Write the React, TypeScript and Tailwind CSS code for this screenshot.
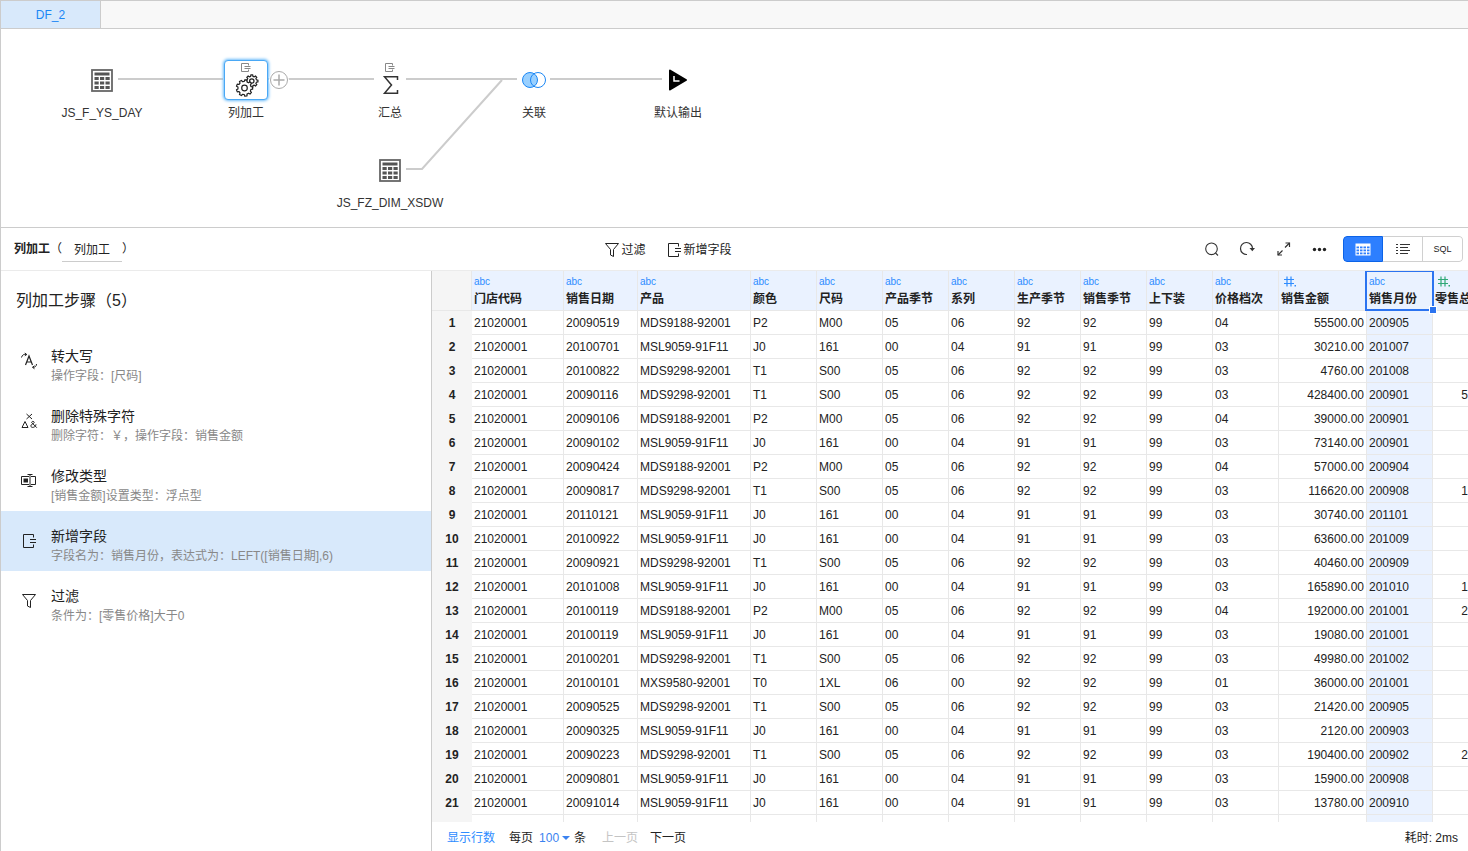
import type { ReactNode } from "react";

const FONT = "font-['Liberation_Sans','Noto_Sans_CJK_SC',sans-serif]";

/* ---------- icons ---------- */

function gearPath(cx: number, cy: number, outer: number, inner: number, teeth: number) {
  const step = (Math.PI * 2) / teeth;
  const points: string[] = [];
  for (let i = 0; i < teeth; i++) {
    const a = i * step;
    const corners: [number, number][] = [
      [inner, a - step * 0.3],
      [outer, a - step * 0.2],
      [outer, a + step * 0.2],
      [inner, a + step * 0.3],
    ];
    corners.forEach(([r, t]) => {
      points.push(`${(cx + r * Math.cos(t)).toFixed(2)} ${(cy + r * Math.sin(t)).toFixed(2)}`);
    });
  }
  return `M${points.join("L")}Z`;
}

function FieldGlyph({ className }: { className: string }) {
  return (
    <svg viewBox="0 0 16 16" className={className} fill="none" stroke="currentColor" aria-hidden="true">
      <path d="M12.500 4.500v-3h-10v13h10v-3M9 6.500h6M9 9.500h6" />
    </svg>
  );
}

function FunnelGlyph() {
  return (
    <svg viewBox="0 0 16 16" className="size-4" fill="none" stroke="currentColor" aria-hidden="true">
      <path d="M1.500 1.500h13l-5 6v7l-3-1.500v-5.500z" strokeLinejoin="round" />
    </svg>
  );
}

function NodeSvg({ children }: { children: ReactNode }) {
  return (
    <svg viewBox="0 0 44 44" className="size-11" fill="none" aria-hidden="true">
      {children}
    </svg>
  );
}

function SheetNodeIcon() {
  return (
    <NodeSvg>
      <rect x="12" y="12" width="20" height="21" stroke="#666" strokeWidth="1.800" />
      <path d="M14.500 14.500h15v3h-15z" fill="#555" />
      {[19, 23.5, 28].map((y) =>
        [14.5, 20, 25.5].map((x) => <rect key={`${x}-${y}`} x={x} y={y} width="4.200" height="3" fill="#555" />),
      )}
    </NodeSvg>
  );
}

function SmallField() {
  return <path d="M24.500 7.500v-2h-7v8h7v-2M20.500 8.500h6M20.500 10.500h6" stroke="#888" />;
}

function GearsNodeIcon() {
  return (
    <NodeSvg>
      <SmallField />
      <g stroke="#222" strokeWidth="1.200" fill="#fff" strokeLinejoin="round">
        <path d={gearPath(27.8, 23, 6.2, 4.8, 8)} />
        <circle cx="27.800" cy="23" r="2.200" />
        <path d={gearPath(20.5, 30, 8.2, 6.6, 9)} />
        <circle cx="20.500" cy="30" r="2.800" />
      </g>
    </NodeSvg>
  );
}

function SigmaNodeIcon() {
  return (
    <NodeSvg>
      <SmallField />
      <path d="M29.500 22v-3.300h-13l7 8.300-7 8.300h13v-3.300" stroke="#333" strokeWidth="1.500" />
    </NodeSvg>
  );
}

function JoinNodeIcon() {
  return (
    <NodeSvg>
      <circle cx="26" cy="22" r="7.500" fill="#fff" />
      <circle cx="18" cy="22" r="7.500" fill="#99d0ff" stroke="#1b87f5" />
      <circle cx="26" cy="22" r="7.500" stroke="#1b87f5" />
    </NodeSvg>
  );
}

function OutputNodeIcon() {
  return (
    <NodeSvg>
      <path d="M14 12.500L30 22 14 31.500z" fill="#000" stroke="#000" strokeWidth="2" strokeLinejoin="round" />
      <path d="M18 18v5h5.500" stroke="#fff" strokeWidth="1.500" />
    </NodeSvg>
  );
}

/* ---------- flow canvas ---------- */

const NODES = [
  { label: "JS_F_YS_DAY", place: "left-[41px] top-[29px]", icon: <SheetNodeIcon />, selected: false },
  { label: "列加工", place: "left-[185px] top-[29px]", icon: <GearsNodeIcon />, selected: true },
  { label: "汇总", place: "left-[329px] top-[29px]", icon: <SigmaNodeIcon />, selected: false },
  { label: "关联", place: "left-[473px] top-[29px]", icon: <JoinNodeIcon />, selected: false },
  { label: "默认输出", place: "left-[617px] top-[29px]", icon: <OutputNodeIcon />, selected: false },
  { label: "JS_FZ_DIM_XSDW", place: "left-[329px] top-[119px]", icon: <SheetNodeIcon />, selected: false },
];

function FlowCanvas() {
  return (
    <section className="relative h-[199px] shrink-0 overflow-hidden border-b border-[#ccc] bg-white">
      <svg className="absolute top-0 left-0 h-[198px] w-[720px]" viewBox="0 0 720 198" fill="none" stroke="#ccc" strokeWidth="2" aria-hidden="true">
        <path d="M117 50H222M287 50H373M405 50H516M549 50H661M405 140H421L501 51" />
        <path d="M267 50H270" />
      </svg>
      {NODES.map((node) => (
        <div key={node.label} className={`absolute flex w-[120px] flex-col items-center ${node.place}`}>
          <div className="relative flex size-11 items-center justify-center">
            {node.selected && (
              <span className="absolute inset-x-0 inset-y-0.5 rounded-sm border border-[#4aa8f5] bg-white shadow-[0_0_3px_1px_#6bbcfa]" />
            )}
            <span className="relative">{node.icon}</span>
          </div>
          <span className="text-xs leading-[22px] whitespace-nowrap text-[#333]">{node.label}</span>
        </div>
      ))}
      <button type="button" aria-label="添加" className="absolute top-[41px] left-[268px] size-5 rounded-full bg-white">
        <svg viewBox="0 0 20 20" className="size-5" fill="none" stroke="#aaa" aria-hidden="true">
          <circle cx="10" cy="10" r="8.500" />
          <path d="M10 4.500v11M4.500 10h11" strokeWidth="1.500" />
        </svg>
      </button>
    </section>
  );
}

/* ---------- toolbar ---------- */

function Toolbar() {
  const iconButton = "flex h-6 w-6 items-center justify-center";
  return (
    <header className="flex h-[43px] shrink-0 items-center border-b border-[#ebebeb] pr-[5px] pl-[13px] text-xs text-[#222]">
      <div className="flex w-2/5 items-center">
        <label htmlFor="step-name" className="font-bold">列加工</label>
        <span>（</span>
        <input
          id="step-name"
          defaultValue="列加工"
          className="h-[26px] w-[60px] border-b border-[#ccc] bg-transparent px-3 outline-none"
        />
        <span>）</span>
      </div>
      <div className="ml-2.5 flex items-center gap-5 pt-0.5">
        <button type="button" className="flex items-center gap-0.5">
          <FunnelGlyph />
          过滤
        </button>
        <button type="button" className="flex items-center gap-0.5">
          <FieldGlyph className="size-4" />
          新增字段
        </button>
      </div>
      <div className="flex flex-1 items-center justify-end gap-3">
        <button type="button" aria-label="搜索" className={iconButton}>
          <svg viewBox="0 0 16 16" className="size-4" fill="none" stroke="#333" strokeWidth="1.100" aria-hidden="true">
            <circle cx="8.500" cy="7.800" r="5.800" />
            <path d="M12.500 12l2.500 2.500" />
          </svg>
        </button>
        <button type="button" aria-label="刷新" className={iconButton}>
          <svg viewBox="0 0 16 16" className="size-4" fill="none" stroke="#333" strokeWidth="1.200" aria-hidden="true">
            <path d="M8 13.500A6 6 0 1 1 13.500 7.500" />
            <path d="M10.500 7h5.500l-2.700 3.300z" fill="#333" stroke="none" />
          </svg>
        </button>
        <button type="button" aria-label="全屏" className={iconButton}>
          <svg viewBox="0 0 16 16" className="size-4" fill="none" stroke="#333" strokeWidth="1.200" aria-hidden="true">
            <path d="M10 6.500l4.500-4.500M7.500 9.500L3 14" />
            <path d="M10.500 2h4v4M3 10v4h4" />
          </svg>
        </button>
        <button type="button" aria-label="更多" className={iconButton}>
          <svg viewBox="0 0 16 16" className="size-4" fill="#222" aria-hidden="true">
            <circle cx="3.500" cy="8.500" r="1.700" />
            <circle cx="8.500" cy="8.500" r="1.700" />
            <circle cx="13.500" cy="8.500" r="1.700" />
          </svg>
        </button>
        <div className="flex h-[26px] overflow-hidden rounded-sm">
          <button type="button" aria-label="表格" className="flex w-10 items-center justify-center rounded-l-sm border border-[#0c63e7] bg-[#2d7fff]">
            <svg viewBox="0 0 16 13" className="h-[13px] w-4" aria-hidden="true">
              <path d="M.5.500h15v12H.5z" fill="#fff" />
              {[3.5, 6.5, 9.5].map((y) =>
                [1.5, 5, 8.5, 12].map((x) => <rect key={`${x}-${y}`} x={x} y={y} width="2.500" height="1.800" fill="#2d7fff" />),
              )}
            </svg>
          </button>
          <button type="button" aria-label="列表" className="flex w-10 items-center justify-center border-y border-r border-[#d0d0d0]">
            <svg viewBox="0 0 16 12" className="h-3 w-4" fill="none" stroke="#333" aria-hidden="true">
              <path d="M1 1.500h2M1 4.500h2M1 7.500h2M1 10.500h2M5 1.500h10M5 4.500h8M5 7.500h10M5 10.500h8" />
            </svg>
          </button>
          <button type="button" className="flex w-10 items-center justify-center rounded-r-sm border-y border-r border-[#d0d0d0] text-[9px]">
            SQL
          </button>
        </div>
      </div>
    </header>
  );
}

/* ---------- steps ---------- */

function UppercaseGlyph() {
  return (
    <svg viewBox="0 0 18 18" className="size-[18px]" fill="none" stroke="currentColor" aria-hidden="true">
      <path d="M5.500 13L9 4l3.500 9M6.700 10h4.600" strokeWidth="1.200" />
      <path d="M1.500 5.500C2 3 4 1.800 6.500 2.500M4.800 1l2 1.500-2 1.300M16.500 12c0 2.300-1.500 3.500-3.800 3.300M14.500 13.700l-2 1.600 2 1.500" />
    </svg>
  );
}

function SpecialCharsGlyph() {
  return (
    <svg viewBox="0 0 18 18" className="size-[18px]" fill="none" stroke="currentColor" aria-hidden="true">
      <path d="M6.500 2l5.500 5M12 2L6.500 7" />
      <path d="M5 9.500L2 15.500h6z" />
      <path d="M16.800 15.700l-5-5c-.7-1.500 2.500-1.900 2.400-.1-.1 1.200-3.400 1.500-3.400 3.300 0 2.300 4.700 2.100 5.200-1.600" />
    </svg>
  );
}

function TypeGlyph() {
  return (
    <svg viewBox="0 0 18 18" className="size-[18px]" fill="none" stroke="currentColor" aria-hidden="true">
      <path d="M9 4.500H1.500v8H9M11 4.500h4.500v8H11M10 3v11.500M7.500 2.500h5M7.500 14.500h5" />
      <path d="M3.500 6.500H8v4H3.500z" fill="currentColor" stroke="none" />
    </svg>
  );
}

const STEPS = [
  { title: "转大写", detail: "操作字段：[尺码]", icon: <UppercaseGlyph />, active: false },
  { title: "删除特殊字符", detail: "删除字符：￥，操作字段：销售金额", icon: <SpecialCharsGlyph />, active: false },
  { title: "修改类型", detail: "[销售金额]设置类型：浮点型", icon: <TypeGlyph />, active: false },
  { title: "新增字段", detail: "字段名为：销售月份，表达式为：LEFT([销售日期],6)", icon: <FieldGlyph className="size-4" />, active: true },
  { title: "过滤", detail: "条件为：[零售价格]大于0", icon: <FunnelGlyph />, active: false },
];

function StepList() {
  return (
    <aside className="w-[431px] shrink-0 border-r border-[#ccc]">
      <h2 className="flex h-[60px] items-center pl-[15px] text-base text-[#222]">列加工步骤（5）</h2>
      <ul>
        {STEPS.map((step) => (
          <li key={step.title}>
            <button
              type="button"
              className={`flex h-[60px] w-full items-center gap-[13px] pl-[19px] text-left ${step.active ? "bg-[#d8e9fb]" : ""}`}
            >
              <span className="flex w-[18px] justify-center text-[#222]">{step.icon}</span>
              <span className="flex flex-col pt-2.5">
                <span className="text-sm leading-5 text-[#222]">{step.title}</span>
                <span className="text-xs leading-5 text-[#888]">{step.detail}</span>
              </span>
            </button>
          </li>
        ))}
      </ul>
    </aside>
  );
}

/* ---------- data grid ---------- */

const COLUMNS = [
  { name: "门店代码", kind: "text", width: "w-[92px]" },
  { name: "销售日期", kind: "text", width: "w-[74px]" },
  { name: "产品", kind: "text", width: "w-[113px]" },
  { name: "颜色", kind: "text", width: "w-[66px]" },
  { name: "尺码", kind: "text", width: "w-[66px]" },
  { name: "产品季节", kind: "text", width: "w-[66px]" },
  { name: "系列", kind: "text", width: "w-[66px]" },
  { name: "生产季节", kind: "text", width: "w-[66px]" },
  { name: "销售季节", kind: "text", width: "w-[66px]" },
  { name: "上下装", kind: "text", width: "w-[66px]" },
  { name: "价格档次", kind: "text", width: "w-[66px]" },
  { name: "销售金额", kind: "number", width: "w-[88px]" },
  { name: "销售月份", kind: "text", width: "w-[66px]" },
  { name: "零售总", kind: "measure", width: "" },
];
const MONTH_COLUMN = 12;

const PRODUCTS: Record<string, string[]> = {
  "MDS9188-92001": ["P2", "M00", "05", "06", "92", "92", "99", "04"],
  "MSL9059-91F11": ["J0", "161", "00", "04", "91", "91", "99", "03"],
  "MDS9298-92001": ["T1", "S00", "05", "06", "92", "92", "99", "03"],
  "MXS9580-92001": ["T0", "1XL", "06", "00", "92", "92", "99", "01"],
};

const SALES: [string, string, string, string][] = [
  ["20090519", "MDS9188-92001", "55500.00", ""],
  ["20100701", "MSL9059-91F11", "30210.00", ""],
  ["20100822", "MDS9298-92001", "4760.00", ""],
  ["20090116", "MDS9298-92001", "428400.00", "5"],
  ["20090106", "MDS9188-92001", "39000.00", ""],
  ["20090102", "MSL9059-91F11", "73140.00", ""],
  ["20090424", "MDS9188-92001", "57000.00", ""],
  ["20090817", "MDS9298-92001", "116620.00", "1"],
  ["20110121", "MSL9059-91F11", "30740.00", ""],
  ["20100922", "MSL9059-91F11", "63600.00", ""],
  ["20090921", "MDS9298-92001", "40460.00", ""],
  ["20101008", "MSL9059-91F11", "165890.00", "1"],
  ["20100119", "MDS9188-92001", "192000.00", "2"],
  ["20100119", "MSL9059-91F11", "19080.00", ""],
  ["20100201", "MDS9298-92001", "49980.00", ""],
  ["20100101", "MXS9580-92001", "36000.00", ""],
  ["20090525", "MDS9298-92001", "21420.00", ""],
  ["20090325", "MSL9059-91F11", "2120.00", ""],
  ["20090223", "MDS9298-92001", "190400.00", "2"],
  ["20090801", "MSL9059-91F11", "15900.00", ""],
  ["20091014", "MSL9059-91F11", "13780.00", ""],
];

const ROWS = SALES.map(([date, product, amount, total]) => [
  "21020001",
  date,
  product,
  ...PRODUCTS[product],
  amount,
  date.slice(0, 6),
  total,
]);

function cellTone(column: number) {
  if (column === MONTH_COLUMN) return "bg-[#eaf2ff] px-0.5";
  if (column === 11) return "px-0.5 text-right";
  if (column === 13) return "text-right";
  return "px-0.5";
}

function NumberGlyph({ className }: { className: string }) {
  return (
    <svg viewBox="0 0 14 15" className={`h-[15px] w-3.5 ${className}`} fill="none" stroke="currentColor" strokeWidth="1.200" aria-hidden="true">
      <path d="M1 5.500h10M1 9.500h10M4 2.500v10M8 2.500v10" />
      <path d="M11.500 11h1.500v1.500h-1.500z" fill="currentColor" stroke="none" />
    </svg>
  );
}

function DataGrid() {
  return (
    <div className="min-h-0 flex-1 overflow-hidden">
      <table className="w-full table-fixed border-separate border-spacing-0 text-xs text-[#222]">
        <thead>
          <tr className="h-10">
            <th className="w-10 border-r border-b border-[#e8e8e8] bg-[#f5f5f5]" aria-label="行号" />
            {COLUMNS.map((column, index) => (
              <th
                key={column.name}
                scope="col"
                className={`relative h-10 border-b border-[#e8e8e8] bg-[#eaf2ff] p-0 pt-[3px] pl-0.5 text-left align-top whitespace-nowrap ${index < 13 ? "border-r" : ""} ${column.width}`}
              >
                {column.kind === "text" ? (
                  <span className="block text-[10px] leading-4 font-normal text-[#2e8cff]">abc</span>
                ) : (
                  <NumberGlyph className={column.kind === "number" ? "mb-px ml-0.5 text-[#2e8cff]" : "mb-px ml-0.5 text-[#2fa876]"} />
                )}
                <span className="block leading-[18px]">{column.name}</span>
                {index === MONTH_COLUMN && (
                  <span className="absolute -top-px -right-0.5 -bottom-px -left-0.5 z-10 border-2 border-[#2b73f0]">
                    <span className="absolute -right-1 -bottom-1 size-1.5 bg-[#2b73f0] outline outline-white" />
                  </span>
                )}
              </th>
            ))}
          </tr>
        </thead>
        <tbody>
          {ROWS.map((row, rowIndex) => (
            <tr key={rowIndex}>
              <th scope="row" className="h-6 bg-[#f5f5f5] p-0 text-center font-bold">{rowIndex + 1}</th>
              {row.map((value, column) => (
                <td
                  key={column}
                  className={`h-6 border-b border-[#e8e8e8] py-0 whitespace-nowrap ${column < 13 ? "border-r" : ""} ${cellTone(column)}`}
                >
                  {value}
                </td>
              ))}
            </tr>
          ))}
          <tr aria-hidden="true">
            <td className="h-6 bg-[#f5f5f5]" />
            {COLUMNS.map((column, index) => (
              <td key={column.name} className={`h-6 border-[#e8e8e8] ${index < 13 ? "border-r" : ""} ${cellTone(index)}`} />
            ))}
          </tr>
        </tbody>
      </table>
    </div>
  );
}

function Pager() {
  return (
    <footer className="flex h-[29px] shrink-0 items-center pt-0.5 pr-2.5 pl-[15px] text-xs text-[#222]">
      <a href="#rows" className="text-[#2e8cff]">显示行数</a>
      <label htmlFor="page-size" className="ml-3.5">每页</label>
      <span className="relative ml-1.5 flex items-center text-[#3b82f0]">
        <select id="page-size" defaultValue="100" className="w-[31px] appearance-none bg-transparent text-xs outline-none">
          <option>100</option>
        </select>
        <svg viewBox="0 0 8 4" className="pointer-events-none absolute right-0 h-1 w-2" fill="currentColor" aria-hidden="true">
          <path d="M0 0h8L4 4z" />
        </svg>
      </span>
      <span className="ml-1">条</span>
      <button type="button" disabled className="ml-4 text-[#c4c4c4]">上一页</button>
      <button type="button" className="ml-3">下一页</button>
      <span className="ml-auto">耗时: 2ms</span>
    </footer>
  );
}

export default function App() {
  return (
    <div className={`flex h-screen flex-col overflow-hidden border-t border-l border-[#ccc] bg-white ${FONT}`}>
      <nav className="flex h-7 shrink-0 border-b border-[#ccc] bg-[#f8f8f8]">
        <a href="#df2" className="flex w-[100px] items-center justify-center border-r border-[#ccc] bg-[#d8e9fb] text-xs text-[#1b87f5]">
          DF_2
        </a>
      </nav>
      <FlowCanvas />
      <Toolbar />
      <div className="flex min-h-0 flex-1">
        <StepList />
        <main className="flex min-w-0 flex-1 flex-col">
          <DataGrid />
          <Pager />
        </main>
      </div>
    </div>
  );
}
